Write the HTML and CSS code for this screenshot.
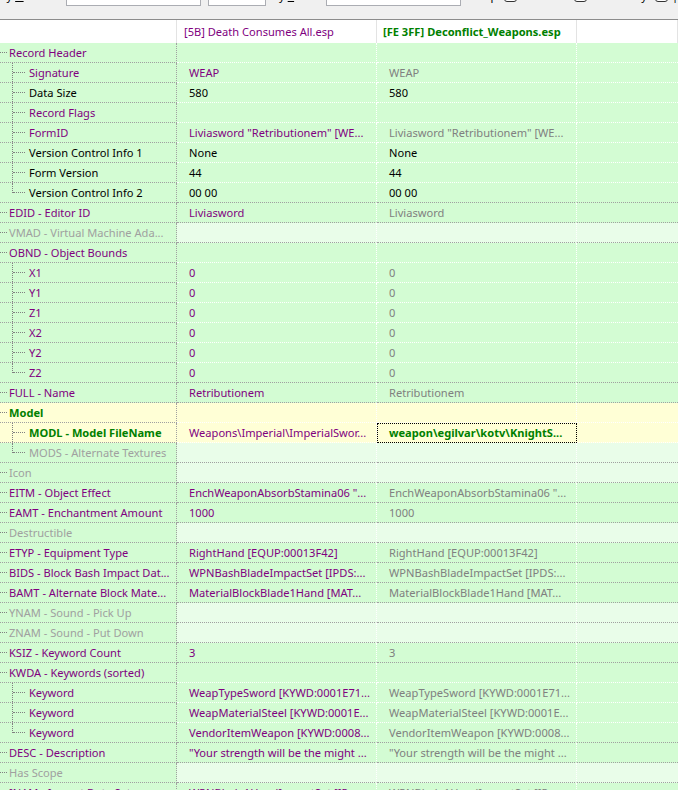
FILE: index.html
```html
<!DOCTYPE html>
<html lang="en">
<head>
  <meta charset="UTF-8">
  <title>WEAP - Liviasword</title>
  <link rel="stylesheet" href="styles.css">
</head>
<body>

  <div class="toolbar">
    <div class="filters">
      <span class="lbl lbl-name">by <u>N</u>ame:</span>
      <div class="edit edit-name"></div>
      <div class="edit edit-kind"></div>
      <span class="lbl lbl-value">by <u>V</u>alue:</span>
      <div class="edit edit-value"></div>
      <span class="lbl lbl-keep">Keep</span>
      <div class="check"></div>
      <span class="lbl lbl-hide">Hide no conflict</span>
      <div class="check"></div>
      <span class="lbl lbl-only">Only</span>
      <div class="check"></div>
      <span class="lbl">|</span>
    </div>
  </div>

  <div class="view">
    <div class="head">
      <div></div>
      <div class="plugin">[5B] Death Consumes All.esp</div>
      <div class="plugin winner">[FE 3FF] Deconflict_Weapons.esp</div>
      <div></div>
    </div>

    <div class="row open">
      <div class="name"><i class="stub"></i><span>Record Header</span></div>
      <div class="val a"></div><div class="val b"></div><div class="val c"></div>
    </div>
    <div class="row open">
      <div class="name"><i class="guide"></i><i class="twig"></i><span>Signature</span></div>
      <div class="val a">WEAP</div><div class="val b">WEAP</div><div class="val c"></div>
    </div>
    <div class="row open k">
      <div class="name"><i class="guide"></i><i class="twig"></i><span>Data Size</span></div>
      <div class="val a">580</div><div class="val b">580</div><div class="val c"></div>
    </div>
    <div class="row open">
      <div class="name"><i class="guide"></i><i class="twig"></i><span>Record Flags</span></div>
      <div class="val a"></div><div class="val b"></div><div class="val c"></div>
    </div>
    <div class="row open">
      <div class="name"><i class="guide"></i><i class="twig"></i><span>FormID</span></div>
      <div class="val a">Liviasword "Retributionem" [WE...</div><div class="val b">Liviasword "Retributionem" [WE...</div><div class="val c"></div>
    </div>
    <div class="row open k">
      <div class="name"><i class="guide"></i><i class="twig"></i><span>Version Control Info 1</span></div>
      <div class="val a">None</div><div class="val b">None</div><div class="val c"></div>
    </div>
    <div class="row open k">
      <div class="name"><i class="guide"></i><i class="twig"></i><span>Form Version</span></div>
      <div class="val a">44</div><div class="val b">44</div><div class="val c"></div>
    </div>
    <div class="row k">
      <div class="name"><i class="guide end"></i><i class="twig"></i><span>Version Control Info 2</span></div>
      <div class="val a">00 00</div><div class="val b">00 00</div><div class="val c"></div>
    </div>
    <div class="row">
      <div class="name"><i class="stub"></i><span>EDID - Editor ID</span></div>
      <div class="val a">Liviasword</div><div class="val b">Liviasword</div><div class="val c"></div>
    </div>
    <div class="row off">
      <div class="name"><i class="stub"></i><span>VMAD - Virtual Machine Ada...</span></div>
      <div class="val a"></div><div class="val b"></div><div class="val c"></div>
    </div>
    <div class="row open">
      <div class="name"><i class="stub"></i><span>OBND - Object Bounds</span></div>
      <div class="val a"></div><div class="val b"></div><div class="val c"></div>
    </div>
    <div class="row open">
      <div class="name"><i class="guide"></i><i class="twig"></i><span>X1</span></div>
      <div class="val a">0</div><div class="val b">0</div><div class="val c"></div>
    </div>
    <div class="row open">
      <div class="name"><i class="guide"></i><i class="twig"></i><span>Y1</span></div>
      <div class="val a">0</div><div class="val b">0</div><div class="val c"></div>
    </div>
    <div class="row open">
      <div class="name"><i class="guide"></i><i class="twig"></i><span>Z1</span></div>
      <div class="val a">0</div><div class="val b">0</div><div class="val c"></div>
    </div>
    <div class="row open">
      <div class="name"><i class="guide"></i><i class="twig"></i><span>X2</span></div>
      <div class="val a">0</div><div class="val b">0</div><div class="val c"></div>
    </div>
    <div class="row open">
      <div class="name"><i class="guide"></i><i class="twig"></i><span>Y2</span></div>
      <div class="val a">0</div><div class="val b">0</div><div class="val c"></div>
    </div>
    <div class="row">
      <div class="name"><i class="guide end"></i><i class="twig"></i><span>Z2</span></div>
      <div class="val a">0</div><div class="val b">0</div><div class="val c"></div>
    </div>
    <div class="row">
      <div class="name"><i class="stub"></i><span>FULL - Name</span></div>
      <div class="val a">Retributionem</div><div class="val b">Retributionem</div><div class="val c"></div>
    </div>
    <div class="row open model">
      <div class="name"><i class="stub"></i><span>Model</span></div>
      <div class="val a"></div><div class="val b"></div><div class="val c"></div>
    </div>
    <div class="row open model">
      <div class="name"><i class="guide"></i><i class="twig"></i><span>MODL - Model FileName</span></div>
      <div class="val a">Weapons\Imperial\ImperialSwor...</div><div class="val b focus">weapon\egilvar\kotv\KnightS...</div><div class="val c"></div>
    </div>
    <div class="row off">
      <div class="name"><i class="guide end"></i><i class="twig"></i><span>MODS - Alternate Textures</span></div>
      <div class="val a"></div><div class="val b"></div><div class="val c"></div>
    </div>
    <div class="row off">
      <div class="name"><i class="stub"></i><span>Icon</span></div>
      <div class="val a"></div><div class="val b"></div><div class="val c"></div>
    </div>
    <div class="row">
      <div class="name"><i class="stub"></i><span>EITM - Object Effect</span></div>
      <div class="val a">EnchWeaponAbsorbStamina06 "...</div><div class="val b">EnchWeaponAbsorbStamina06 "...</div><div class="val c"></div>
    </div>
    <div class="row">
      <div class="name"><i class="stub"></i><span>EAMT - Enchantment Amount</span></div>
      <div class="val a">1000</div><div class="val b">1000</div><div class="val c"></div>
    </div>
    <div class="row off">
      <div class="name"><i class="stub"></i><span>Destructible</span></div>
      <div class="val a"></div><div class="val b"></div><div class="val c"></div>
    </div>
    <div class="row">
      <div class="name"><i class="stub"></i><span>ETYP - Equipment Type</span></div>
      <div class="val a">RightHand [EQUP:00013F42]</div><div class="val b">RightHand [EQUP:00013F42]</div><div class="val c"></div>
    </div>
    <div class="row">
      <div class="name"><i class="stub"></i><span>BIDS - Block Bash Impact Dat...</span></div>
      <div class="val a">WPNBashBladeImpactSet [IPDS:...</div><div class="val b">WPNBashBladeImpactSet [IPDS:...</div><div class="val c"></div>
    </div>
    <div class="row">
      <div class="name"><i class="stub"></i><span>BAMT - Alternate Block Mate...</span></div>
      <div class="val a">MaterialBlockBlade1Hand [MAT...</div><div class="val b">MaterialBlockBlade1Hand [MAT...</div><div class="val c"></div>
    </div>
    <div class="row off">
      <div class="name"><i class="stub"></i><span>YNAM - Sound - Pick Up</span></div>
      <div class="val a"></div><div class="val b"></div><div class="val c"></div>
    </div>
    <div class="row off">
      <div class="name"><i class="stub"></i><span>ZNAM - Sound - Put Down</span></div>
      <div class="val a"></div><div class="val b"></div><div class="val c"></div>
    </div>
    <div class="row">
      <div class="name"><i class="stub"></i><span>KSIZ - Keyword Count</span></div>
      <div class="val a">3</div><div class="val b">3</div><div class="val c"></div>
    </div>
    <div class="row open">
      <div class="name"><i class="stub"></i><span>KWDA - Keywords (sorted)</span></div>
      <div class="val a"></div><div class="val b"></div><div class="val c"></div>
    </div>
    <div class="row open">
      <div class="name"><i class="guide"></i><i class="twig"></i><span>Keyword</span></div>
      <div class="val a">WeapTypeSword [KYWD:0001E71...</div><div class="val b">WeapTypeSword [KYWD:0001E71...</div><div class="val c"></div>
    </div>
    <div class="row open">
      <div class="name"><i class="guide"></i><i class="twig"></i><span>Keyword</span></div>
      <div class="val a">WeapMaterialSteel [KYWD:0001E...</div><div class="val b">WeapMaterialSteel [KYWD:0001E...</div><div class="val c"></div>
    </div>
    <div class="row">
      <div class="name"><i class="guide end"></i><i class="twig"></i><span>Keyword</span></div>
      <div class="val a">VendorItemWeapon [KYWD:0008...</div><div class="val b">VendorItemWeapon [KYWD:0008...</div><div class="val c"></div>
    </div>
    <div class="row">
      <div class="name"><i class="stub"></i><span>DESC - Description</span></div>
      <div class="val a">"Your strength will be the might ...</div><div class="val b">"Your strength will be the might ...</div><div class="val c"></div>
    </div>
    <div class="row off">
      <div class="name"><i class="stub"></i><span>Has Scope</span></div>
      <div class="val a"></div><div class="val b"></div><div class="val c"></div>
    </div>
    <div class="row">
      <div class="name"><i class="stub"></i><span>INAM - Impact Data Set</span></div>
      <div class="val a">WPNBlade1HandImpactSet [IP...</div><div class="val b">WPNBlade1HandImpactSet [IP...</div><div class="val c"></div>
    </div>
  </div>

</body>
</html>
```

FILE: styles.css
```css
body {
  margin: 0;
  width: 678px;
  height: 790px;
  overflow: hidden;
  background: #fff;
  font-family: "Noto Sans", sans-serif;
  font-size: 11.1px;
  color: #000;
}

/* filter bar, scrolled so only its lower edge shows */
.toolbar {
  height: 19px;
  background: #f0f0f0;
  border-bottom: 1px solid #8c8c8c;
  overflow: hidden;
}

.filters {
  display: flex;
  align-items: center;
  height: 22px;
  margin-top: -16px;
}

.lbl {
  white-space: nowrap;
}

.lbl-name { width: 66px; }
.lbl-value { width: 54px; margin-left: 7px; }
.lbl-keep { margin-left: 10px; width: 33px; }
.lbl-hide { margin-left: 8px; width: 45px; overflow: hidden; }
.lbl-only { margin-left: 8px; width: 48px; text-align: right; padding-right: 8px; }

.edit {
  height: 22px;
  box-sizing: border-box;
  background: #fff;
  border: 1px solid #abadb3;
}

.edit-name { width: 135px; }
.edit-kind { width: 58px; margin-left: 7px; }
.edit-value { width: 135px; }

.check {
  width: 13px;
  height: 13px;
  box-sizing: border-box;
  background: #fff;
  border: 1px solid #333;
  border-radius: 3px;
  margin-right: 4px;
}

/* record tree */
.head,
.row {
  display: grid;
  grid-template-columns: 177px 200px 200px 1fr;
}

.head {
  height: 23px;
  background: #fff;
}

.head > div {
  border-right: 1px solid #e3e3e3;
  line-height: 23px;
  padding-left: 7px;
  white-space: nowrap;
}

.plugin { color: #800080; }
.plugin.winner { color: #008000; font-weight: bold; padding-left: 6px; }

.row {
  color: #800080;
}

.row > div {
  height: 20px;
  box-sizing: border-box;
  line-height: 19px;
  background: #d3fcd3;
  border-bottom: 1px dotted #a0a0a0;
  white-space: nowrap;
  overflow: hidden;
}

.name {
  display: flex;
  align-items: center;
  border-right: 1px dotted #a0a0a0;
}

.val {
  padding-left: 12px;
  border-right: 1px dotted #fff;
}

.val.c { border-right: none; }
.val.b { color: #808080; }

.row.open .val { border-bottom-color: #fff; }

/* tree connectors */
.stub {
  width: 7px;
  height: 0;
  border-top: 1px dotted #808080;
  margin-right: 2px;
}

.guide {
  align-self: stretch;
  width: 12px;
  border-right: 1px dotted #808080;
}

.guide.end {
  align-self: flex-start;
  height: 10px;
}

.twig {
  width: 12px;
  height: 0;
  border-top: 1px dotted #808080;
  margin-right: 4px;
}

/* row states */
.row.k,
.row.k .val.b { color: #000; }

.row.off .name { color: #a0a0a0; }
.row.off .val { background: #e9fde9; }

.row.model > div { background: #ffffd6; }
.row.model .name { color: #008000; font-weight: bold; }

.val.focus {
  color: #008000;
  font-weight: bold;
  outline: 1px dotted #000;
  outline-offset: -1px;
}
```
